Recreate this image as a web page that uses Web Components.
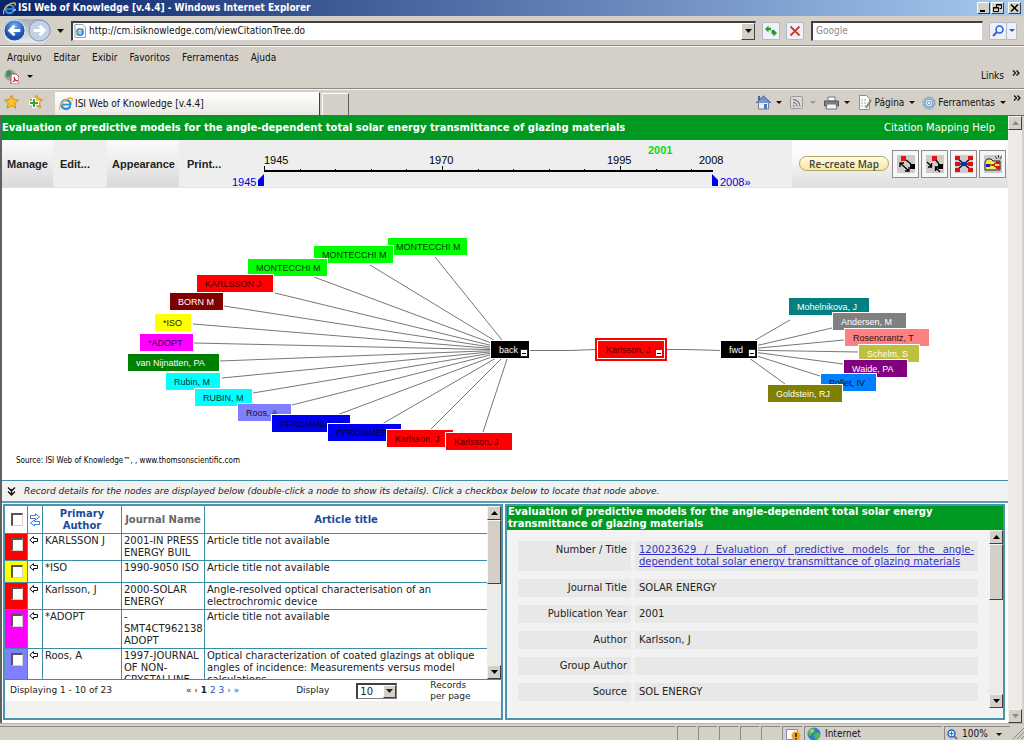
<!DOCTYPE html>
<html lang="en">
<head>
<meta charset="utf-8">
<title>ISI Web of Knowledge [v.4.4]</title>
<style>
html,body{margin:0;padding:0}
body{background:#d4d0c8;font-family:"DejaVu Sans",Verdana,sans-serif;font-size:10px;line-height:12px;color:#222}
</style>
</head>
<body>
<browser-window>
  <title-bar>ISI Web of Knowledge [v.4.4] - Windows Internet Explorer</title-bar>
  <nav-bar></nav-bar>
  <menu-bar></menu-bar>
  <tab-strip>ISI Web of Knowledge [v.4.4]</tab-strip>
  <page-view>
    <page-heading>Evaluation of predictive models for the angle-dependent total solar energy transmittance of glazing materials</page-heading>
    <map-toolbar></map-toolbar>
    <citation-map></citation-map>
    <hint-bar>Record details for the nodes are displayed below (double-click a node to show its details). Click a checkbox below to locate that node above.</hint-bar>
    <detail-panels>
      <record-list></record-list>
      <record-detail></record-detail>
    </detail-panels>
  </page-view>
  <status-bar></status-bar>
</browser-window>
<script>
const base = `*,:host{box-sizing:border-box}
button{font:inherit;color:inherit;margin:0;padding:0;border:0;background:none;display:inline-flex;align-items:center;justify-content:center}
svg{display:block;flex:none}a{color:inherit;text-decoration:none}`;
const chrome = `font-family:"DejaVu Sans Condensed","DejaVu Sans",Tahoma,sans-serif;color:#111;`;
const down = `<svg width="7" height="4" viewBox="0 0 7 4"><path d="M0 0h7L3.500 4z" fill="currentColor"/></svg>`;
const smallDown = `<svg width="6" height="3" viewBox="0 0 6 3"><path d="M0 0h6L3 3z" fill="currentColor"/></svg>`;
const more = `<svg width="8" height="6" fill="none" stroke="#111" stroke-width="1.300"><path d="M1 0.500l2.500 2.500L1 5.500M4.500 .5L7 3 4.500 5.500"/></svg>`;
const ie = s => `<svg width="${s}" height="${s}" viewBox="0 0 14 14"><circle cx="7" cy="7.500" r="4.500" fill="none" stroke="#2f8fe0" stroke-width="2.400"/><path d="M3 7.600h8.500" stroke="#2f8fe0" stroke-width="1.800"/><path d="M11 9.300h2.500V7z" fill="#fff"/><path d="M1 13C-1 10 4 2 12 1c2 0 1.500 2 .6 3" fill="none" stroke="#f0b92c" stroke-width="1.300"/></svg>`;
const globe = `<svg width="14" height="14" viewBox="0 0 14 14"><circle cx="7" cy="7" r="6.500" fill="#2b7fd0"/><path d="M3 2c3-2 5-1 5 1S5 5 4 8 1 7 1 6s1-3 2-4zM9 6c2-1 4 0 4 2s-2 4-4 4-1-2-2-3 1-3 2-3z" fill="#54b948"/><circle cx="5" cy="4" r="2" fill="#fff" opacity=".35"/></svg>`;

function define(name, css, html, setup) {
  customElements.define(name, class extends HTMLElement {
    constructor() {
      super();
      this.attachShadow({ mode: 'open' }).innerHTML = `<style>${base}${css}</style>${html}`;
    }
    connectedCallback() { if (setup) setup(this, this.shadowRoot); }
  });
}

define('browser-window', `:host{display:flex;flex-direction:column;min-height:100vh}`, `<slot></slot>`);

define('title-bar', `:host{display:flex;align-items:center;height:16px;padding:0 3px;background:linear-gradient(90deg,#0a246a,#a6caf0);${chrome}color:#fff;font-weight:bold;font-size:10px}
.t{flex:1;padding-left:2px}
.b{display:flex;gap:1px}.b button{width:13px;height:12px;background:#d4d0c8;border:1px solid;border-color:#fff #404040 #404040 #fff;color:#000}.b button:last-child{margin-left:3px}`,
`${ie(13)}<span class="t"><slot></slot></span><span class="b">
<button aria-label="Minimize"><svg width="9" height="8"><path d="M1 6h5v2h-5z"/></svg></button>
<button aria-label="Restore"><svg width="9" height="8" fill="none" stroke="#000"><path d="M3.500 3V.5h5v4H6.500M3 1h6M.5 3.500h5v4h-5zM0 4h6"/></svg></button>
<button aria-label="Close"><svg width="9" height="8" stroke="#000" stroke-width="1.500"><path d="M1 0.500l7 7M8 .5l-7 7"/></svg></button></span>`);

define('nav-bar', `:host{display:flex;align-items:center;height:30px;padding:0 6px 0 3px;gap:6px;${chrome}font-size:10px;border-bottom:1px solid #8d8a84;background:#d4d0c8}
.arrows{display:flex;align-items:center;background:linear-gradient(#a9b0ba,#e8e8e8);border-radius:12px;height:24px;gap:2px}
.arrows svg{width:23px;height:23px}
.field{display:flex;align-items:center;height:20px;background:#fff;border:1px solid #d4d0c8;border-top:2px solid #404040;border-left:2px solid #404040}
.field input{flex:1;min-width:0;border:0;outline:0;padding:0 3px;font:inherit;background:none;color:#111}
.field input::placeholder{color:#8a8a8a;opacity:1}
.addr{flex:1;margin-left:-2px;padding-left:1px}.addr button{width:14px;height:17px;background:#d4d0c8;border:1px solid;border-color:#fff #404040 #404040 #fff}
.sq{width:18px;height:18px;background:#eef1f7;border:1px solid #b4bac8;border-radius:2px}
.search{width:172px;margin-left:1px}.pair{display:flex;color:#2458c8;margin-right:1px}.pair button+button{width:11px;margin-left:-1px}.dd{width:14px;height:20px;margin-left:-4px}`,
`<span class="arrows"><button aria-label="Back"><svg viewBox="0 0 24 24"><defs><radialGradient id="g" cy=".3"><stop offset="0" stop-color="#7db4f0"/><stop offset="1" stop-color="#1a4fae"/></radialGradient></defs><circle cx="12" cy="12" r="11" fill="url(#g)" stroke="#e8eef8"/><path d="M18 12H8M12 7l-5 5 5 5" fill="none" stroke="#fff" stroke-width="3"/></svg></button>
<button aria-label="Forward"><svg viewBox="0 0 24 24"><circle cx="12" cy="12" r="11" fill="#c3d2e4" stroke="#7d93b5"/><path d="M6 12h10M12 7l5 5-5 5" fill="none" stroke="#fff" stroke-width="3"/></svg></button></span>
<button class="dd" aria-label="Recent pages">${down}</button>
<span class="field addr"><svg width="12" height="14" viewBox="0 0 12 14"><path d="M1 .5h8l2.500 3v10H1z" fill="#fff" stroke="#8ba2c8"/><circle cx="6" cy="8" r="3" fill="none" stroke="#2f8fe0" stroke-width="2"/><path d="M3 8h6" stroke="#2f8fe0"/><path d="M2 12C2 8 6 4 10 4" fill="none" stroke="#f0b92c"/></svg><input aria-label="Address" value="http://cm.isiknowledge.com/viewCitationTree.do"><button aria-label="Address list">${down}</button></span>
<button class="sq" aria-label="Refresh"><svg width="14" height="12" viewBox="0 0 14 12" fill="#2c9a2c"><path d="M1 4l3.500-3.500v2.300h2.500v2.400H4.500v2.300zM13 8l-3.500 3.500V9.200H7.500V5h2v1.800H9.500V4.500z"/></svg></button>
<button class="sq" aria-label="Stop"><svg width="12" height="12" stroke="#cf3b2b" stroke-width="1.800"><path d="M1.500 1.500l9 9M10.500 1.500l-9 9"/></svg></button>
<span class="field search"><input aria-label="Search" placeholder="Google"></span>
<span class="pair"><button class="sq" aria-label="Search"><svg width="12" height="12" fill="none" stroke="#2b62d6"><circle cx="7.500" cy="4.500" r="3.500" stroke-width="1.500"/><path d="M5 7l-4 4" stroke-width="2"/></svg></button><button class="sq" aria-label="Search options">${smallDown}</button></span>`);

define('menu-bar', `:host{display:block;height:43px;${chrome}font-size:10px;border-bottom:1px solid #8d8a84;border-top:1px solid #f4f2ee}
nav{display:flex;gap:12px;padding:5px 7px 0}
.r{display:flex;align-items:center;justify-content:space-between;padding:2px 4px 0 4px;height:22px}.r span{display:flex;align-items:center;gap:8px}.l{align-self:start}`,
`<nav><button>Arquivo</button><button>Editar</button><button>Exibir</button><button>Favoritos</button><button>Ferramentas</button><button>Ajuda</button></nav>
<div class="r"><span><svg width="15" height="15" viewBox="0 0 15 15"><circle cx="6" cy="6" r="5.500" fill="#9aa3a8"/><path d="M3 2c3-2 5 0 4 3s-3 3-5 3z" fill="#3f8f4d"/><path d="M7 5h5l3 3v7H7z" fill="#fff" stroke="#a04a4a"/><path d="M9 13c2-2 2-4 1-5 1 3 2 4 4 4-2-1-4 0-5 1z" fill="none" stroke="#d21b1b"/></svg><button aria-label="PDF options">${smallDown}</button></span><span>Links<button class="l" aria-label="More links">${more}</button></span></div>`);

define('tab-strip', `:host{display:flex;align-items:flex-end;height:26px;${chrome}font-size:10px;border-top:1px solid #f4f2ee;background:#d4d0c8}
.fav{display:flex;gap:9px;padding:0 12px 6px 4px;width:55px}
.tab{display:flex;align-items:center;gap:2px;width:265px;height:23px;padding-left:4px;background:linear-gradient(#fff,#ece9e4);border-right:1px solid #404040;border-top:1px solid #fff}
.new{width:27px;height:22px;margin-left:2px;border:1px solid #fff;border-right-color:#606060;border-bottom:0}
.cmd{flex:1;display:flex;align-items:center;justify-content:flex-end;height:25px}
.cmd button{gap:2px;padding-right:7px}.cmd .more{align-self:start;padding:5px 3px 0 0}.cmd .off{color:#999}.d{width:9px;margin-left:1px;padding-left:2px}.t{padding-left:3px}`,
`<span class="fav"><button aria-label="Favorites"><svg width="15" height="15" viewBox="0 0 15 15"><path d="M7.500 1l2 4.500 5 .5-3.700 3.200 1.100 5-4.400-2.600-4.400 2.600 1.100-5L.5 6l5-.5z" fill="#fbc32f" stroke="#d88a14"/></svg></button><button aria-label="Add to favorites"><svg width="15" height="15" viewBox="0 0 15 15"><path d="M8.500 1l2 4 4 .5-3 3.200 1 5-4-2.600-4.400 2 1.100-4.400L2 6l4.500-1z" fill="#fbc32f" stroke="#d88a14"/><path d="M4 4h4v3h3v4H8v3H4v-3H1V7h3z" fill="#fff"/><path d="M5 5h2v3h3v2H7v3H5v-3H2V8h3z" fill="#35a635"/></svg></button></span>
<a class="tab" href="#">${ie(14)}<slot></slot></a><button class="new" aria-label="New tab"></button>
<span class="cmd">
<button aria-label="Home"><svg width="15" height="15" viewBox="0 0 15 15"><path d="M2.500 7v7h10V7" fill="#eee" stroke="#6e7f9c"/><path d="M0 8l7.500-7L15 8" fill="#7894c8" stroke="#3d5a94"/><path d="M2 1h2v4H2z" fill="#4060a0"/><path d="M8 9h3v5H8z" fill="#5078c0"/></svg><span class="d">${smallDown}</span></button>
<button class="off" aria-label="Feeds"><svg width="15" height="13" viewBox="0 0 15 13"><rect x=".5" y=".5" width="12" height="12" rx="1" fill="#dcdad5" stroke="#999"/><path d="M3 6.500a4 4 0 0 1 4 4M3 3.500a7 7 0 0 1 7 7" fill="none" stroke="#888" stroke-width="1.400"/><circle cx="3.700" cy="9.800" r="1" fill="#888"/></svg><span class="d">${smallDown}</span></button>
<button aria-label="Print"><svg width="15" height="14" viewBox="0 0 15 14"><path d="M4 1h7v4H4z" fill="#fff" stroke="#777"/><path d="M.5 5h14v5H.5z" fill="#7c8390" stroke="#555"/><path d="M3 8h9l1 5H2z" fill="#f4f4f4" stroke="#777"/></svg><span class="d">${smallDown}</span></button>
<button><svg width="14" height="15" viewBox="0 0 14 15"><path d="M1.500.5h7l3 3v11h-10z" fill="#fff" stroke="#8890a0"/><path d="M3 5h6M3 8h6M3 11h6" stroke="#8aa" stroke-dasharray="2 1"/><path d="M8 13l5-8" stroke="#8c8c60" stroke-width="2"/></svg>Página<span class="t">${smallDown}</span></button>
<button><svg width="14" height="14" viewBox="0 0 14 14"><circle cx="7" cy="7" r="5.500" fill="none" stroke="#8fb0cc" stroke-width="2.500" stroke-dasharray="2.600 .7"/><circle cx="7" cy="7" r="4" fill="#d6e4f0" stroke="#7a9cbc"/><circle cx="7" cy="7" r="1.600" fill="#fff" stroke="#7a9cbc"/></svg>Ferramentas<span class="t">${smallDown}</span></button>
<button class="more" aria-label="More commands">${more}</button></span>`);

define('scroll-bar', `:host{display:flex;flex-direction:column;width:14px;flex:none;background:#edebe7;color:#000}
:host([off]){color:#8f8c86}
button{height:14px;width:100%;background:#d4d0c8;border:1px solid;border-color:#f4f2ee #404040 #404040 #f4f2ee}
.th{width:100%;background:#d4d0c8;border:1px solid;border-color:#f8f6f2 #404040 #404040 #f8f6f2}:host([off]) .th{display:none}i{flex:1}`,
`<button aria-label="Scroll up"><svg width="7" height="4"><path d="M0 4h7L3.500 0z" fill="currentColor"/></svg></button><div class="th"></div><i></i><button aria-label="Scroll down">${down}</button>`,
(el, r) => { r.querySelector('.th').style.height = (el.getAttribute('thumb') || 0) + 'px'; });

define('page-view', `:host{display:flex;flex:1;border-top:1px solid #606060;border-left:2px solid #606060;padding-right:2px}
main{flex:1;min-width:0;background:#fff;display:flex;flex-direction:column;padding-bottom:3px}`,
`<main><slot></slot></main><scroll-bar off></scroll-bar>`);

define('page-heading', `:host{display:flex;align-items:center;justify-content:space-between;height:24px;background:#009a22;color:#fff;padding-right:13px;flex:none}
h1{margin:0;font-size:10px;line-height:12px}`, `<h1><slot></slot></h1><a href="#">Citation Mapping Help</a>`);

define('map-toolbar', `:host{display:flex;height:48px;flex:none;background:#eee;border-bottom:1px solid #e2e2e2;font-family:"Liberation Sans",Arial,sans-serif}
nav{display:grid;grid-template-columns:51px 54px 72px 53px}
nav button{font-weight:bold;font-size:11px;justify-content:flex-start;padding-left:7px}
nav button:nth-child(odd){background:linear-gradient(#fbfbfb,#dadada);padding-left:5px}
nav button:nth-child(4){padding-left:8px}
.time{flex:1}text{font-size:11px}.yr{font-weight:bold;fill:#00e020}.lim{fill:#0000d8}
.act{display:flex;align-items:center;gap:2px;padding:0 3px 0 7px;background:linear-gradient(#fff,#fafafa 35%,#dedede)}
.re{width:90px;height:15px;border:1px solid #b3a36a;border-radius:8px;background:linear-gradient(#fffbe0,#f7e9a0);font:600 10px "Open Sans",sans-serif;color:#444;margin-right:1px}
.ic{width:27px;height:28px;border:1px solid #8c8c8c;background:#f6f6f6}.ic svg{background:#ccc}`,
`<nav><button>Manage</button><button>Edit...</button><button>Appearance</button><button>Print...</button></nav>
<div class="time"><svg width="560" height="47" viewBox="232 140 560 47"></svg></div>
<div class="act"><button class="re">Re-create Map</button>
<button class="ic" aria-label="Expand"><svg width="18" height="18"><path d="M4 1h5v5H4z" fill="#e11"/><path d="M13 9h5v5h-5z"/><path d="M3 8l9 8M3 12V8h4M8 16h4v-4M9 5l5 4" stroke="#000" fill="none" stroke-width="1.300"/></svg></button>
<button class="ic" aria-label="Collapse"><svg width="18" height="18"><path d="M6 1h5v5H6z" fill="#e11"/><path d="M12 9h5v5h-5z"/><path d="M1 7l4 4M5.500 8v4H2M14 17l-4-4M9.500 16v-4H13M10 5l3 4" stroke="#000" fill="none" stroke-width="1.300"/></svg></button>
<button class="ic" aria-label="Both directions"><svg width="18" height="18"><path d="M2 3l14 12M2 15L16 3M2 9h14" stroke="#111" stroke-width="1.500"/><path d="M0 1h5v4H0zM0 7h5v4H0zM0 13h5v4H0zM13 1h5v4h-5zM13 7h5v4h-5zM13 13h5v4h-5z" fill="#d11"/><path d="M7 7h4v4H7z" fill="#12c"/></svg></button>
<button class="ic" aria-label="New map"><svg width="18" height="18"><path d="M1 15V7l2-3h4l2 2h7v9z" fill="#f6e64a" stroke="#222"/><path d="M4 10h5M9 10l4-3M9 10l4 3" stroke="#111"/><path d="M2 9h4v3H2z" fill="#12c"/><path d="M12 6h4v3h-4zM12 11h4v3h-4zM8 9h3v2H8z" fill="#d11"/><path d="M13 4l-2-3M14.500 3V0M16 4l2-3" stroke="#222" stroke-width=".8"/></svg></button></div>`,
(el, r) => {
  let s = '<path d="M264 171h449" stroke="#000" stroke-width="2"/>';
  for (let i = 0; i < 13; i++) {
    const x = Math.round(264 + i * 35.6), big = i % 5 === 0;
    s += `<path d="M${x}.5 ${big ? 166 : 169}V171" stroke="#000"/>`;
  }
  for (const [x, t] of [[264, '1945'], [429, '1970'], [607, '1995'], [699, '2008']]) s += `<text x="${x}" y="164">${t}</text>`;
  s += `<text class="yr" x="648" y="154">2001</text>
  <text class="lim" x="232" y="186">1945</text><path d="M264 174v12h-6v-6z" fill="#00e"/>
  <path d="M712 174v12h6v-6z" fill="#00e"/><text class="lim" x="720" y="186">2008»</text>`;
  r.querySelector('svg').innerHTML = s;
});

define('map-node', `:host{position:absolute;height:17px;font:9px/18px "Liberation Sans",Arial,sans-serif;box-shadow:0 0 0 1px #fff;padding-left:8px;white-space:nowrap}
:host([root]){height:23px;border:2px solid red;box-shadow:inset 0 0 0 1px #fff;line-height:20px;padding-left:9px}
button{display:none;position:absolute;right:1px;bottom:1px;width:8px;height:8px;background:#fff;border:1px solid #222}button::before{content:"";width:4px;height:1px;background:#000}
:host([fold]) button{display:flex}:host([root]) button{border-color:#e00;right:2px;bottom:2px}`,
`<slot></slot><button aria-label="Collapse branch"></button>`);

const nodes = [
 ['MONTECCHI M',388,238,79,'#0f0','#030'],['MONTECCHI M',314,246,79,'#0f0','#030'],['MONTECCHI M',248,259,79,'#0f0','#030'],
 ['KARLSSON J',197,275,76,'#f00','#400'],['BORN M',170,293,53,'#800000','#fff'],['*ISO',155,314,36,'#ff0','#220'],
 ['*ADOPT',140,334,53,'#f0f','#303'],['van Nijnatten, PA',128,354,91,'#008000','#fff'],['Rubin, M',166,373,54,'#0ff','#033'],
 ['RUBIN, M',195,389,57,'#0ff','#033'],['Roos, A',238,404,53,'#8080ff','#113'],['PFROMMER, P',272,415,78,'#0000f0','#003'],
 ['PFROMMER, P',328,424,73,'#0000f0','#003'],['Karlsson, J',387,430,66,'#f00','#400'],['Karlsson, J',446,433,66,'#f00','#400'],
 ['back',491,341,38,'#000','#fff','fold'],['Karlsson, J',595,338,72,'#f00','#400','root fold'],['fwd',721,341,36,'#000','#fff','fold'],
 ['Mohelnikova, J',789,298,80,'#008080','#fff'],['Andersen, M',833,313,73,'#808080','#fff'],['Rosencrantz, T',845,329,84,'#ff8080','#311'],
 ['Schelm, S',859,345,60,'#c0c040','#fffff0'],['Waide, PA',844,360,63,'#800080','#fff'],['Pollet, IV',821,374,55,'#0080ff','#012'],
 ['Goldstein, RJ',768,385,74,'#808000','#fff']];
const backEnds = [[435,257],[370,265],[314,277],[275,293],[224,306],[193,324],[194,343],[220,361],[222,378],[253,393],[292,405],[337,415],[382,424],[431,429],[483,432]];
const fwdEnds = [[790,320],[832,328],[844,340],[858,352],[843,364],[820,376],[785,384]];

define('citation-map', `:host{display:block;flex:1 0 auto;min-height:292px;position:relative;overflow:hidden}
.src{position:absolute;left:14px;top:268px;font-family:"DejaVu Sans Condensed","DejaVu Sans",sans-serif;font-size:8px;line-height:10px;color:#000}`,
`<svg width="1006" height="292" viewBox="2 188 1006 292" fill="none" stroke="#777"></svg><div class="n"></div>
<div class="src">Source: ISI Web of Knowledge™, , www.thomsonscientific.com</div>`,
(el, r) => {
  r.querySelector('svg').innerHTML = `<path d="${backEnds.map(p => `M${p}L510 350`).join('')}${fwdEnds.map(p => `M${p}L738 350`).join('')}M530 350.500h40L596 349.500M667 349.500h18L722 350.500"/>`;
  const box = r.querySelector('.n');
  for (const [t, x, y, w, bg, fg, flags] of nodes) {
    const n = document.createElement('map-node');
    n.textContent = t;
    (flags || '').split(' ').filter(Boolean).forEach(f => n.setAttribute(f, ''));
    n.style.cssText = `left:${x - 2}px;top:${y - 188}px;width:${w}px;background:${bg};color:${fg}`;
    box.append(n);
  }
});

define('hint-bar', `:host{display:flex;align-items:center;gap:8px;height:23px;flex:none;background:#f2f2f2;border-top:1px solid #3b8ea8;border-bottom:2px solid #5a9db5;padding-left:5px;font-size:9px;font-style:italic}`,
`<button aria-label="Hide details"><svg width="9" height="9" fill="none" stroke="#111" stroke-width="1.300"><path d="M1 .5l3.500 3.500L8 .5M1 4.500L4.500 8 8 4.500M4.500 2v5"/></svg></button><span><slot></slot></span>`);

define('detail-panels', `:host{display:grid;grid-template-columns:1fr 1fr;gap:2px;padding:1px 3px 0 1px;height:217px;flex:none}
::slotted(*){border:2px solid #4a95ae;min-width:0;min-height:0}`, `<slot></slot>`);

const rows = [
 ['#f00','KARLSSON J','2001-IN PRESS ENERGY BUIL','Article title not available'],
 ['#ff0','*ISO','1990-9050 ISO','Article title not available'],
 ['#f00','Karlsson, J','2000-SOLAR ENERGY','Angle-resolved optical characterisation of an electrochromic device'],
 ['#f0f','*ADOPT','- SMT4CT962138 ADOPT','Article title not available'],
 ['#8080ff','Roos, A','1997-JOURNAL OF NON-CRYSTALLINE','Optical characterization of coated glazings at oblique angles of incidence: Measurements versus model calculations']];
const arrow = `<svg width="9" height="8" fill="#fff" stroke="#111"><path d="M4.500 .5v2h4v3h-4v2L.8 4z"/></svg>`;

define('record-list', `:host{display:flex;flex-direction:column;background:#f2f2f2}
.view{flex:none;height:174px;display:flex;background:#fff;border-bottom:1px solid #3b8ea8;overflow:hidden}
.clip{flex:1;min-width:0;overflow:hidden}
table{width:100%;table-layout:fixed;border-collapse:separate;border-spacing:0}
th,td{border:solid #3b8ea8;border-width:0 1px 1px 0;padding:1px 1px 1px 2px;vertical-align:top;text-align:left;font-weight:normal}
th:last-child,td:last-child{border-right:0}
th{height:28px;vertical-align:middle;text-align:center;font-weight:bold;color:#1c4a9c;padding:1px}th.j{color:#666}
td:first-child,th:first-child{padding:4px 0 4px 6px;text-align:left}td:nth-child(2){padding:2px 1px}
input{appearance:none;margin:0;width:12px;height:13px;display:block;background:#fff;border:1px solid #d4d0c8;border-top:2px solid #555;border-left:2px solid #555}
.foot{display:flex;align-items:center;height:21px;background:#fff;font-size:9px;line-height:11px;flex:none;padding-left:5px}
.foot a{color:#1c5ab0}
.pg{margin-left:74px;white-space:nowrap}.dl{margin-left:57px}.rp{margin-left:33px;width:50px}
.sel{display:grid;margin-left:27px;width:41px;height:16px;border:1px solid #808080;border-top:2px solid #404040;border-left:2px solid #404040;background:#fff}
.sel>*{grid-area:1/1}.sel select{appearance:none;border:0;outline:0;background:none;font:inherit;font-size:10px;padding:0 2px;width:100%;color:#222}
.sel i{justify-self:end;width:13px;background:#d4d0c8;border:1px solid;border-color:#fff #404040 #404040 #fff;display:flex;align-items:center;justify-content:center;pointer-events:none}`,
`<div class="view"><div class="clip"><table><colgroup><col style="width:23px"><col style="width:15px"><col style="width:79px"><col style="width:83px"><col></colgroup>
<thead><tr><th><input type="checkbox" aria-label="Select all"></th><th><svg width="12" height="14" fill="none" stroke="#4a78d8"><path d="M1.500 2.500h5V.7L10.500 4 6.500 7V5.500h-5zM10.500 8.500h-5V7L1.500 10l4 3v-1.500h5z"/></svg></th><th>Primary Author</th><th class="j">Journal Name</th><th>Article title</th></tr></thead><tbody></tbody></table></div><scroll-bar thumb="64"></scroll-bar></div>
<div class="foot"><span>Displaying 1 - 10 of 23</span><span class="pg">« ‹ <b>1</b> <a href="#">2</a> <a href="#">3</a> <a href="#">›</a> <a href="#">»</a></span><label class="dl" for="per">Display</label><span class="sel"><select id="per"><option>10</option></select><i>${down}</i></span><span class="rp">Records per page</span></div>`,
(el, r) => {
  r.querySelector('tbody').innerHTML = rows.map(([c, a, j, t]) => `<tr><td style="background:${c}"><input type="checkbox" aria-label="Locate ${a}"></td><td>${arrow}</td><td>${a}</td><td>${j}</td><td>${t}</td></tr>`).join('');
});

define('record-detail', `:host{display:flex;flex-direction:column;background:#f2f2f2}
h2{margin:0;font-size:10px;line-height:12px;background:#009a22;color:#fff;padding:0 40px 0 1px;flex:none}
.v{display:flex;height:178px;overflow:hidden}
dl{flex:1;margin:0;padding:11px 11px 0;display:grid;grid-template-columns:113px 1fr;grid-auto-rows:max-content;gap:8px 4px;align-content:start;align-self:start}
dt,dd{margin:0;background:#e8e8e8;padding:3px 4px;text-align:right}dd{text-align:justify}dd a{color:#33c;text-decoration:underline}`,
`<h2>Evaluation of predictive models for the angle-dependent total solar energy transmittance of glazing materials</h2>
<div class="v"><dl><dt>Number / Title</dt><dd><a href="#">120023629 / Evaluation of predictive models for the angle-dependent total solar energy transmittance of glazing materials</a></dd>
<dt>Journal Title</dt><dd>SOLAR ENERGY</dd><dt>Publication Year</dt><dd>2001</dd><dt>Author</dt><dd>Karlsson, J</dd><dt>Group Author</dt><dd></dd><dt>Source</dt><dd>SOL ENERGY</dd><dt></dt><dd></dd></dl><scroll-bar thumb="56"></scroll-bar></div>`);

define('status-bar', `:host{display:flex;height:18px;padding-top:2px;${chrome}font-size:10px;border-top:1px solid #b8b4ac;background:#d4d0c8}
span{display:flex;align-items:center;gap:4px;border-left:1px solid #8d8a84;border-top:1px solid #8d8a84;margin-right:2px;padding-left:2px}
.e{width:19px}.m{flex:1;border-left:0}.i{width:20px}.n{width:138px}.z{width:66px}button{margin-left:auto;margin-right:8px}`,
`<span class="m"></span><span class="e"></span><span class="e"></span><span class="e"></span><span class="e"></span><span class="e"></span>
<span class="i"><svg width="16" height="13"><path d="M1.500 1.500h11v10h-11z" fill="#fff" stroke="#88a"/><circle cx="11" cy="8" r="4.500" fill="#f0a31c"/><path d="M11 5v4M11 10v1.500" stroke="#222" stroke-width="1.500"/></svg></span>
<span class="n">${globe}Internet</span><span class="z"><svg width="11" height="11" fill="none" stroke="#2b62d6"><circle cx="4.500" cy="4.500" r="3.500" fill="#dff" stroke-width="1.500"/><path d="M7 7l3 3" stroke="#777" stroke-width="2"/><path d="M2.500 4.500h4M4.500 2.500v4"/></svg>100%<button aria-label="Zoom level">${smallDown}</button></span>
<svg width="12" height="14" stroke="#8d8a84" fill="none"><path d="M1 13L12 2M5 13l7-7M9 13l3-3"/></svg>`);
</script>
</body>
</html>
